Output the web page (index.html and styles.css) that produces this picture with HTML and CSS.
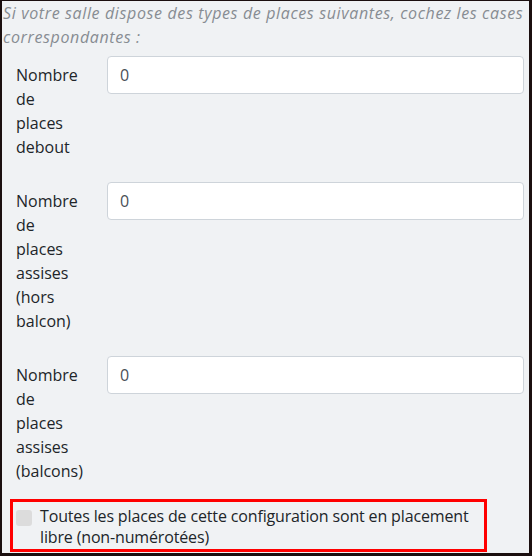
FILE: index.html
```html
<!DOCTYPE html>
<html lang="fr">
<head>
<meta charset="utf-8">
<link rel="stylesheet" href="styles.css">
</head>
<body>
<div class="frame">
  <p class="hint">Si votre salle dispose des types de places suivantes, cochez les cases correspondantes :</p>
  <div class="row">
    <label class="lbl">Nombre de places debout</label>
    <input class="field" type="text" value="0">
  </div>
  <div class="row">
    <label class="lbl">Nombre de places assises (hors balcon)</label>
    <input class="field" type="text" value="0">
  </div>
  <div class="row last">
    <label class="lbl">Nombre de places assises (balcons)</label>
    <input class="field" type="text" value="0">
  </div>
  <div class="check-box">
    <span class="check"></span>
    <span class="check-text">Toutes les places de cette configuration sont en placement libre (non-numérotées)</span>
  </div>
</div>
</body>
</html>
```
FILE: styles.css
```css
html, body {
  margin: 0;
  padding: 0;
  background: #1b0f0f;
}
.frame {
  box-sizing: border-box;
  width: 532px;
  height: 556px;
  background: #f0f2f4;
  border-style: solid;
  border-color: #1b0f0f;
  border-width: 1px 3px 3px 2px;
  font-family: "Open Sans", "Liberation Sans", sans-serif;
  font-size: 16px;
  color: #212529;
  overflow: hidden;
}
.hint {
  margin: 0 0 7px 0;
  padding-left: 1px;
  font-style: italic;
  color: #878c92;
  line-height: 24px;
  letter-spacing: 0.63px;
}
.row {
  display: flex;
  align-items: flex-start;
  padding-left: 14px;
  padding-right: 5px;
  margin-bottom: 16px;
}
.row.last {
  margin-bottom: 9px;
}
.lbl {
  width: 72px;
  flex: none;
  padding: 7px 0;
  line-height: 24px;
  margin-right: 19px;
  word-spacing: 8px;
}
.field {
  flex: 1;
  min-width: 0;
  box-sizing: border-box;
  height: 38px;
  border: 1px solid #ced4da;
  border-radius: 4px;
  background: #fff;
  padding: 6px 12px;
  font-family: inherit;
  font-size: 16px;
  color: #495057;
  outline: none;
}
.check-box {
  box-sizing: border-box;
  width: 477px;
  height: 53px;
  margin-left: 8px;
  border: 3px solid #ff0000;
  padding: 4px 3px 0 3px;
  display: flex;
  align-items: flex-start;
  gap: 8px;
  line-height: 21px;
  letter-spacing: -0.15px;
}
.check {
  flex: none;
  width: 16px;
  height: 16px;
  margin-top: 4px;
  border-radius: 3px;
  background: #dcdcdc;
}
.check-text {
  flex: 1;
}
```
